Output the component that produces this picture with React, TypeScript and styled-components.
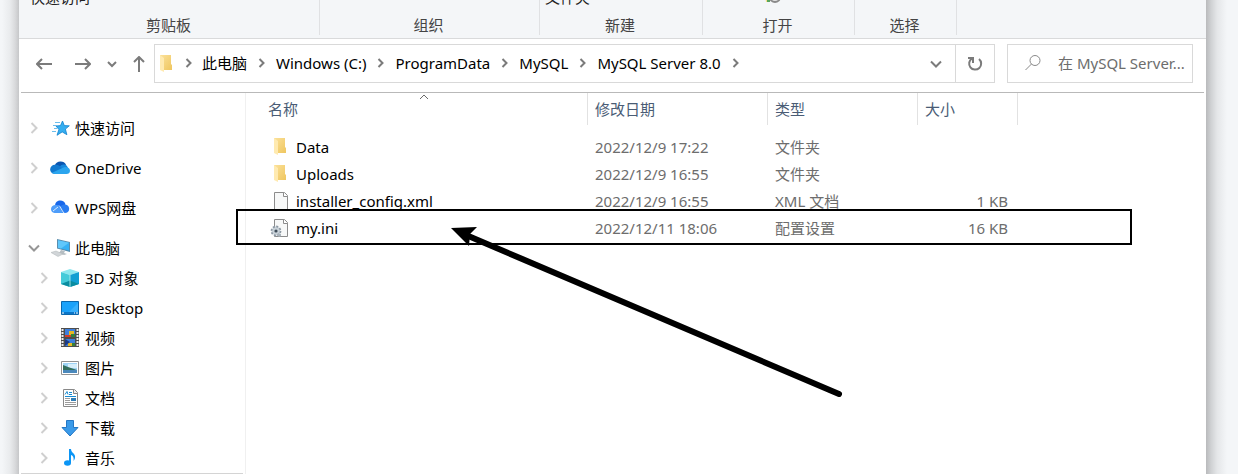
import React from "react";
import styled, { createGlobalStyle } from "styled-components";

const GlobalStyle = createGlobalStyle`
  * { box-sizing: border-box; }
  body {
    margin: 0;
    background: #f4f6f8;
    font-family: "Noto Sans", "Noto Sans CJK SC", sans-serif;
    font-size: 15px;
    line-height: 20px;
    color: #000;
  }
  button, input { font: inherit; }
  svg { display: block; flex: none; }
`;

const Page = styled.div`
  display: grid;
  grid-template-columns: 19px minmax(0, 1fr) 32px;
  min-height: 100vh;
  overflow: hidden;
`;

const Shade = styled.div<{ $side: "left" | "right" }>`
  background: ${(p) =>
    p.$side === "left"
      ? "linear-gradient(to left, #c6c7c9 0, #d9dadc 4px, #e9ebed 9px, #f4f6f8 17px)"
      : "linear-gradient(to right, #b9babc 0, #cfd1d3 5px, #e4e6e8 11px, #f4f6f8 21px)"};
`;

const Window = styled.div`
  display: flex;
  flex-direction: column;
  min-width: 0;
  background: #fff;
`;

const Ribbon = styled.div`
  display: flex;
  height: 39px;
  padding: 0 0 3px 1px;
  background: #f4f6f8;
  border-bottom: 1px solid #d9dadb;
`;

const RibbonGroup = styled.section<{ $width: number }>`
  display: flex;
  flex-direction: column;
  justify-content: space-between;
  width: ${(p) => p.$width}px;
  height: 35px;
  border-right: 1px solid #e0e1e3;
`;

const Commands = styled.div<{ $inset: number }>`
  display: flex;
  align-items: flex-end;
  height: 7px;
  padding-left: ${(p) => p.$inset}px;
  overflow: hidden;
`;

const Command = styled.button`
  flex: none;
  padding: 0;
  border: 0;
  background: none;
  color: #222;
`;

const GroupLabel = styled.div`
  padding-right: 2px;
  text-align: center;
  color: #444;
`;

const NavBar = styled.div`
  display: flex;
  align-items: center;
  padding: 5px 13px 9px 10px;
`;

const History = styled.div`
  display: flex;
  gap: 5px;
`;

const NavButton = styled.button<{ $width: number }>`
  display: flex;
  align-items: center;
  justify-content: center;
  flex: none;
  width: ${(p) => p.$width}px;
  height: 39px;
  padding: 0;
  border: 0;
  background: none;
  color: #7b7b7b;
`;

const AddressBox = styled.div`
  display: flex;
  align-items: center;
  flex: 1;
  min-width: 0;
  height: 39px;
  padding-left: 5px;
  border: 1px solid #d9d9d9;
`;

const Crumbs = styled.ol`
  display: flex;
  align-items: center;
  flex: 1;
  min-width: 0;
  margin: 0;
  padding: 0 0 2px;
  list-style: none;
  white-space: nowrap;
  overflow: hidden;
`;

const Crumb = styled.li`
  display: flex;
  align-items: center;
  color: #7b7b7b;
`;

const CrumbLink = styled.a`
  color: #000;
  text-decoration: none;
`;

const RefreshButton = styled(NavButton)`
  height: 37px;
  border-left: 1px solid #d9d9d9;
`;

const SearchBox = styled.label`
  display: flex;
  align-items: center;
  flex: none;
  gap: 16px;
  width: 186px;
  height: 39px;
  margin-left: 12px;
  padding: 0 0 2px 16px;
  border: 1px solid #d9d9d9;
  color: #8a8a8a;
`;

const SearchInput = styled.input`
  flex: 1;
  min-width: 0;
  padding: 0;
  border: 0;
  outline: 0;
  background: none;
  &::placeholder {
    color: #6d6d6d;
    opacity: 1;
  }
`;

const Body = styled.div`
  display: grid;
  grid-template-columns: 225px minmax(0, 1fr);
  flex: 1;
  margin: 0 2px;
  border-top: 1px solid #b9b9b9;
`;

const Sidebar = styled.nav`
  border-right: 1px solid #f0f0f0;
`;

const Tree = styled.ul`
  margin: 0 2px 0 0;
  padding: 20px 0 0 7px;
  border-bottom: 1px solid #d4d4d4;
  list-style: none;
`;

const TreeRow = styled.li<{ $child?: boolean; $spaced?: boolean }>`
  display: flex;
  align-items: center;
  height: 30px;
  padding-left: ${(p) => (p.$child ? 10 : 0)}px;
  margin-bottom: ${(p) => (p.$spaced ? 10 : 0)}px;
`;

const Toggle = styled.button<{ $open?: boolean }>`
  padding: 0;
  border: 0;
  margin-right: 10px;
  background: none;
  color: ${(p) => (p.$open ? "#969696" : "#cfcfcf")};
`;

const TreeLink = styled.a`
  display: flex;
  align-items: center;
  gap: 5px;
  color: #000;
  text-decoration: none;
  white-space: nowrap;
`;

const ListPane = styled.main`
  position: relative;
  padding-left: 15px;
`;

const FileTable = styled.table`
  table-layout: fixed;
  width: 757px;
  border-collapse: separate;
  border-spacing: 0;

  tbody::before {
    content: "";
    display: block;
    height: 8px;
  }
`;

const HeaderCell = styled.th`
  position: relative;
  height: 32px;
  padding: 0 7px;
  border-right: 1px solid #e2e2e2;
  text-align: left;
  font-weight: 400;
`;

const SortButton = styled.button`
  display: block;
  padding: 0;
  border: 0;
  background: none;
  color: #4a5c75;
`;

const SortMark = styled.span`
  position: absolute;
  top: 1px;
  left: 50%;
  margin-left: -5px;
  color: #6a6a6a;
`;

const Cell = styled.td<{ $end?: boolean }>`
  height: 27px;
  padding: 0 ${(p) => (p.$end ? 10 : 7)}px 0 7px;
  text-align: ${(p) => (p.$end ? "right" : "left")};
  color: #6d6d6d;
  white-space: nowrap;
`;

const FileName = styled.span`
  display: flex;
  align-items: center;
  gap: 6px;
  color: #000;
`;

const Highlight = styled.div`
  position: absolute;
  top: 116px;
  left: -10px;
  width: 896px;
  height: 36px;
  border: 2px solid #000;
`;

const Pointer = styled.svg`
  position: absolute;
  top: 129px;
  left: 200px;
`;

type ChevronProps = { width?: number; down?: boolean; size?: number; weight?: number };

function Chevron({ width = 12, down, size = 5, weight = 2 }: ChevronProps) {
  const c = width / 2;
  const d = down
    ? `M${c - size} ${7 - size / 2}l${size} ${size}l${size} ${-size}`
    : `M${c - size / 2} ${7 - size}l${size} ${size}l${-size} ${size}`;
  return (
    <svg width={width} height="14" fill="none" stroke="currentColor" strokeWidth={weight} aria-hidden="true">
      <path d={d} />
    </svg>
  );
}

function FolderIcon({ width = 22 }: { width?: number }) {
  const x = width === 22 ? 6 : 0;
  return (
    <svg width={width} height="20" viewBox={`${-x} 0 ${width} 20`} aria-hidden="true">
      <defs>
        <linearGradient id="folderBack" x1="0" y1="0" x2="1" y2="1">
          <stop offset="0" stopColor="#fbe19a" />
          <stop offset="1" stopColor="#efc65f" />
        </linearGradient>
      </defs>
      <path d="M0 1h11v9l1 1v5H4L0 13z" fill="url(#folderBack)" />
      <path d="M0 1l4 3v14L0 16z" fill="#ffeab0" />
    </svg>
  );
}

function PageShape() {
  return (
    <>
      <path d="M6.5 1.5h10l3 3v14h-13z" fill="#f7f8f8" stroke="#8c8c8c" />
      <path d="M15.5 1.5v4h4" fill="#fff" stroke="#8c8c8c" />
    </>
  );
}

function FileIcon() {
  return (
    <svg width="22" height="20" aria-hidden="true">
      <PageShape />
    </svg>
  );
}

function SettingsFileIcon() {
  return (
    <svg width="22" height="20" aria-hidden="true">
      <PageShape />
      <circle cx="8" cy="13" r="4.4" fill="#c3ccd4" stroke="#8d99a4" strokeWidth="2" strokeDasharray="2 1.4" />
      <circle cx="8" cy="13" r="3.6" fill="#c9d2d9" />
      <circle cx="8" cy="13" r="1.6" fill="#3f4d59" />
      <path d="M10 15l3 1v2l-2 1-2-2z" fill="#a9b3bb" />
    </svg>
  );
}

function TreeIcon({ name }: { name: string }) {
  return (
    <svg width="20" height="20" aria-hidden="true">
      {name === "quick" && (
        <>
          <path
            d="M12.5 3l1.800 4.600 5 .2-3.900 3.300 1.500 5.600-4.700-2.800-5.200 3.400 1.900-5.700L6 8l4.500-.4z"
            fill="#35aef0"
            stroke="#1382cd"
            strokeWidth="0.8"
          />
          <path d="M5 4.5h5M3 7.5h4M4 10.500h3M2 13.500h4" stroke="#6bbdec" />
        </>
      )}
      {name === "onedrive" && (
        <>
          <path d="M5 7a6 5.5 0 0 1 11-.5l-4 5z" fill="#0a55b0" />
          <path d="M4.5 16A4.6 4.6 0 0 1 5 6.800c3-.4 5 1.200 8 3.200l-6 6z" fill="#1179cf" />
          <path d="M10 8.500c1-2 4.500-3.200 7-.5l1 2-5 1z" fill="#1687dc" />
          <path d="M2 14.800l11-5c2-1.600 7-.8 7 3 0 2.200-1.500 3.200-3.500 3.200h-12c-1 0-2-.5-2.500-1.200z" fill="#2ba5ee" />
        </>
      )}
      {name === "wps" && (
        <>
          <path d="M5 8c0-7 9.500-7 10.500-1.500l-5 4z" fill="#1767ea" />
          <path d="M4.500 15C0 14.500-.5 8 5 7c4-.5 5 2 6.500 4.500L14 15z" fill="#4e9dfa" />
          <path d="M10 9c2-3.500 9-3.500 9.200 1.800 0 3-2 4.200-4.200 4.200-3 0-3.500-3-5-6z" fill="#2a7df2" />
          <path d="M9 7.500c2 1.500 2.500 5 5 7.500M3 13l5-4" fill="none" stroke="#d7ebff" />
        </>
      )}
      {name === "pc" && (
        <>
          <path d="M7 1l13 3v10L7 10.500z" fill="#5a8dad" />
          <path d="M8 2.200l11 2.600v7.800L8 9.700z" fill="#36b1f5" />
          <path d="M8 2.200l11 2.600-8 5.700-3-.8z" fill="#60c7fb" />
          <path d="M11 12l4 1-1 2 3 1-3 1-5-2z" fill="#b5bdc2" />
          <path d="M1 14.500l5-1.500 7 3-5 2.500z" fill="#d1d5d8" stroke="#afb4b7" strokeWidth="0.5" />
        </>
      )}
      {name === "cube" && (
        <>
          <path d="M1 4l9-3 9 3-9 3z" fill="#8de8ef" />
          <path d="M1 4l9 3v12l-9-3z" fill="#45cbd9" />
          <path d="M19 4l-9 3v12l9-3z" fill="#119fd3" />
          <path d="M1 16l9-3.500 9 3.500-9 3z" fill="#0a8c9f" />
          <path d="M10 7v12" stroke="#bdf3f5" strokeWidth="0.8" />
        </>
      )}
      {name === "desktop" && (
        <>
          <path d="M1.500 3.500h17v13h-17z" fill="#1ba2fa" stroke="#0c67ac" />
          <path d="M9 14l9-9v9z" fill="#38b0fc" />
          <path d="M2 15h16" stroke="#0a76c9" strokeWidth="2" />
          <path d="M2 15h2M14 15h1M16 15h2" stroke="#fff" />
        </>
      )}
      {name === "video" && (
        <>
          <path d="M1 0h18v19H1z" fill="#4d4d4d" />
          <path d="M2.500 1v18M17.500 1v18" stroke="#eee" strokeWidth="2" strokeDasharray="2 1" />
          <path d="M5 1h10v8H5zM5 11h10v7H5z" fill="#3d7fdc" />
          <path d="M9 3h5v4H9zM8 15h4v3H8z" fill="#e8b923" />
          <path d="M5 7h9v2H5z" fill="#d63a28" />
          <path d="M11 6h4v3h-4zM12 15h3v3h-3z" fill="#35803a" />
          <path d="M5 11l5 3-5 4z" fill="#1c3b86" />
        </>
      )}
      {name === "picture" && (
        <>
          <path d="M1.500 3.500h17v13h-17z" fill="#fff" stroke="#929292" />
          <path d="M3 5h14v10H3z" fill="#9ed2f4" />
          <path d="M8 6h9v4H8z" fill="#d6eefa" />
          <path d="M3 7l5 2 9 3v1H3z" fill="#336d5b" />
          <path d="M3 12h14v3H3z" fill="#4a88bb" />
        </>
      )}
      {name === "document" && (
        <>
          <path d="M3.500 1.500h11l3 3v14h-14z" fill="#fff" stroke="#888" />
          <path d="M13.500 1.500v4h4" fill="#eee" stroke="#888" />
          <path d="M5 6.500l2-3 1 3M9 4.500h3M9 6.500h3M5 8.500h11" fill="none" stroke="#168bd3" />
          <path d="M5 10.500h5M5 12.500h5M5 14.500h11M5 16.500h11" stroke="#9b9b9b" />
          <path d="M11 10h5v3h-5z" fill="#317db5" />
        </>
      )}
      {name === "download" && (
        <path d="M6.500 2.500h7v7h4.500L10 18 2 9.500h4.500z" fill="#3a9ae9" stroke="#2477c5" />
      )}
      {name === "music" && (
        <>
          <path d="M9 1h2c0 4 5 4.500 4 9-.2 1-.7 2-1.500 3 .8-4-1-5.500-2.500-6v8H9z" fill="#0b95f5" />
          <ellipse cx="7.500" cy="15" rx="3.500" ry="2.800" fill="#0b95f5" />
        </>
      )}
    </svg>
  );
}

const crumbs = ["此电脑", "Windows (C:)", "ProgramData", "MySQL", "MySQL Server 8.0"];

const tree = [
  { label: "快速访问", icon: "quick", spaced: true },
  { label: "OneDrive", icon: "onedrive", spaced: true },
  { label: "WPS网盘", icon: "wps", spaced: true },
  { label: "此电脑", icon: "pc", open: true },
  { label: "3D 对象", icon: "cube", child: true },
  { label: "Desktop", icon: "desktop", child: true },
  { label: "视频", icon: "video", child: true },
  { label: "图片", icon: "picture", child: true },
  { label: "文档", icon: "document", child: true },
  { label: "下载", icon: "download", child: true },
  { label: "音乐", icon: "music", child: true },
];

const files = [
  { name: "Data", date: "2022/12/9 17:22", type: "文件夹", size: "", Icon: FolderIcon },
  { name: "Uploads", date: "2022/12/9 16:55", type: "文件夹", size: "", Icon: FolderIcon },
  { name: "installer_config.xml", date: "2022/12/9 16:55", type: "XML 文档", size: "1 KB", Icon: FileIcon },
  { name: "my.ini", date: "2022/12/11 18:06", type: "配置设置", size: "16 KB", Icon: SettingsFileIcon },
];

const columns = ["名称", "修改日期", "类型", "大小"];

export default function App() {
  return (
    <Page>
      <GlobalStyle />
      <Shade $side="left" />
      <Window>
        <Ribbon>
          <RibbonGroup $width={300}>
            <Commands $inset={10}>
              <Command>快速访问</Command>
            </Commands>
            <GroupLabel>剪贴板</GroupLabel>
          </RibbonGroup>
          <RibbonGroup $width={220}>
            <Commands $inset={0} />
            <GroupLabel>组织</GroupLabel>
          </RibbonGroup>
          <RibbonGroup $width={163}>
            <Commands $inset={5}>
              <Command>文件夹</Command>
            </Commands>
            <GroupLabel>新建</GroupLabel>
          </RibbonGroup>
          <RibbonGroup $width={152}>
            <Commands $inset={60}>
              <Command aria-label="历史记录">
                <svg width="20" height="20">
                  <path d="M1 0h5v15H3z" fill="#f8df8c" />
                  <path d="M4 13h3v2H4z" fill="#58a55c" />
                  <circle cx="12" cy="10" r="5" fill="#e6e6e6" stroke="#8a8a8a" strokeWidth="2" />
                  <path d="M12 6v6" fill="none" stroke="#777" />
                </svg>
              </Command>
            </Commands>
            <GroupLabel>打开</GroupLabel>
          </RibbonGroup>
          <RibbonGroup $width={102}>
            <Commands $inset={0} />
            <GroupLabel>选择</GroupLabel>
          </RibbonGroup>
        </Ribbon>

        <NavBar>
          <History>
            <NavButton $width={30} aria-label="后退">
              <svg width="16" height="16" fill="none" stroke="currentColor" strokeWidth="2">
                <path d="M1 8h15M6 3L1 8l5 5" />
              </svg>
            </NavButton>
            <NavButton $width={37} aria-label="前进">
              <svg width="16" height="16" fill="none" stroke="currentColor" strokeWidth="2">
                <path d="M0 8h15M10 3l5 5-5 5" />
              </svg>
            </NavButton>
            <NavButton $width={12} aria-label="最近浏览的位置">
              <Chevron down size={4} />
            </NavButton>
            <NavButton $width={31} aria-label="上移">
              <svg width="14" height="16" fill="none" stroke="currentColor" strokeWidth="2">
                <path d="M7 16V1M2 6l5-5 5 5" />
              </svg>
            </NavButton>
          </History>
          <AddressBox>
            <FolderIcon width={15} />
            <Crumbs>
              <Crumb>
                <Chevron width={27} size={4} />
              </Crumb>
              {crumbs.map((c) => (
                <Crumb key={c}>
                  <CrumbLink href="#">{c}</CrumbLink>
                  <Chevron width={29} size={4} />
                </Crumb>
              ))}
            </Crumbs>
            <NavButton $width={38} aria-label="展开">
              <Chevron down />
            </NavButton>
            <RefreshButton $width={39} aria-label="刷新">
              <svg width="16" height="16" fill="none" stroke="currentColor" strokeWidth="2">
                <path d="M12 3a6 6 0 1 1-7-.5M1 2h5v5" />
              </svg>
            </RefreshButton>
          </AddressBox>
          <SearchBox>
            <svg width="18" height="18" fill="none" stroke="currentColor">
              <circle cx="11" cy="6.500" r="5" />
              <path d="M7.500 10L1.500 16" />
            </svg>
            <SearchInput aria-label="搜索" placeholder="在 MySQL Server..." />
          </SearchBox>
        </NavBar>

        <Body>
          <Sidebar>
            <Tree>
              {tree.map((t) => (
                <TreeRow key={t.label} $child={t.child} $spaced={t.spaced}>
                  <Toggle $open={t.open} aria-label={t.label} aria-expanded={!!t.open}>
                    <Chevron down={t.open} />
                  </Toggle>
                  <TreeLink href="#">
                    <TreeIcon name={t.icon} />
                    {t.label}
                  </TreeLink>
                </TreeRow>
              ))}
            </Tree>
          </Sidebar>

          <ListPane>
            <FileTable>
              <colgroup>
                <col width="327" />
                <col width="180" />
                <col width="150" />
                <col width="100" />
              </colgroup>
              <thead>
                <tr>
                  {columns.map((c, i) => (
                    <HeaderCell key={c} scope="col">
                      <SortButton>{c}</SortButton>
                      {i === 0 && (
                        <SortMark>
                          <svg width="10" height="6" fill="none" stroke="currentColor">
                            <path d="M1 5l4-4 4 4" />
                          </svg>
                        </SortMark>
                      )}
                    </HeaderCell>
                  ))}
                </tr>
              </thead>
              <tbody>
                {files.map(({ name, date, type, size, Icon }) => (
                  <tr key={name}>
                    <Cell>
                      <FileName>
                        <Icon />
                        {name}
                      </FileName>
                    </Cell>
                    <Cell>{date}</Cell>
                    <Cell>{type}</Cell>
                    <Cell $end>{size}</Cell>
                  </tr>
                ))}
              </tbody>
            </FileTable>
            <Highlight />
            <Pointer width="402" height="180" aria-hidden="true">
              <path d="M5 6l26-1-7 7-1 12z" />
              <path d="M20 13l373 159" stroke="#000" strokeWidth="6" strokeLinecap="round" />
            </Pointer>
          </ListPane>
        </Body>
      </Window>
      <Shade $side="right" />
    </Page>
  );
}
